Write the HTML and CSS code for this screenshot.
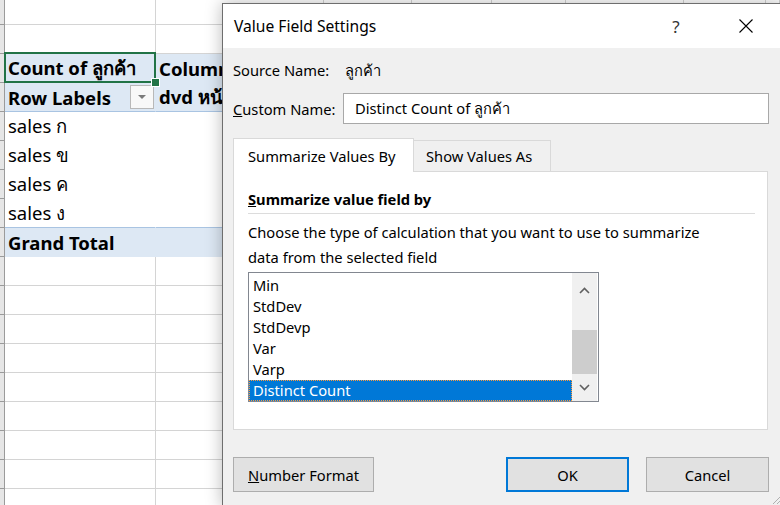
FILE: index.html
```html
<!DOCTYPE html>
<html>
<head>
<meta charset="utf-8">
<link rel="stylesheet" href="styles.css">
</head>
<body>
<div class="sheet">
  <div class="row r-top">
    <div class="rh"></div><div class="c ca"></div><div class="c cb fixed"></div><div class="c cc"></div><div class="c cd"></div><div class="c ce"></div><div class="c cf"></div><div class="c cg"></div><div class="c ch"></div>
  </div>
  <div class="row"><div class="rh"></div><div class="c ca"></div><div class="c cb"></div></div>
  <div class="row pv r-count"><div class="rh"></div><div class="c ca sel"><span class="b">Count of ลูกค้า</span><i class="handle"></i></div><div class="c cb"><span class="b clip">Column Labels</span></div></div>
  <div class="row pv r-labels"><div class="rh"></div><div class="c ca"><span class="b">Row Labels</span><span class="dd"><i class="tri"></i></span></div><div class="c cb"><span class="b clip">dvd หน้าร้าน</span></div></div>
  <div class="row data"><div class="rh"></div><div class="c ca"><span>sales ก</span></div><div class="c cb"></div></div>
  <div class="row data"><div class="rh"></div><div class="c ca"><span>sales ข</span></div><div class="c cb"></div></div>
  <div class="row data"><div class="rh"></div><div class="c ca"><span>sales ค</span></div><div class="c cb"></div></div>
  <div class="row data last"><div class="rh"></div><div class="c ca"><span>sales ง</span></div><div class="c cb"></div></div>
  <div class="row pv r-total"><div class="rh"></div><div class="c ca"><span class="b">Grand Total</span></div><div class="c cb"></div></div>
  <div class="row"><div class="rh"></div><div class="c ca"></div><div class="c cb"></div></div>
  <div class="row"><div class="rh"></div><div class="c ca"></div><div class="c cb"></div></div>
  <div class="row"><div class="rh"></div><div class="c ca"></div><div class="c cb"></div></div>
  <div class="row"><div class="rh"></div><div class="c ca"></div><div class="c cb"></div></div>
  <div class="row"><div class="rh"></div><div class="c ca"></div><div class="c cb"></div></div>
  <div class="row"><div class="rh"></div><div class="c ca"></div><div class="c cb"></div></div>
  <div class="row"><div class="rh"></div><div class="c ca"></div><div class="c cb"></div></div>
  <div class="row"><div class="rh"></div><div class="c ca"></div><div class="c cb"></div></div>
  <div class="row"><div class="rh"></div><div class="c ca"></div><div class="c cb"></div></div>
</div>

<div class="dialog">
  <div class="titlebar">
    <span class="title">Value Field Settings</span>
    <span class="help">?</span>
    <span class="close"><svg width="14" height="14" viewBox="0 0 14 14"><path d="M0.5 0.5 L13.5 13.5 M13.5 0.5 L0.5 13.5" stroke="#000" stroke-width="1.1" fill="none"/></svg></span>
  </div>
  <div class="dbody">
    <div class="src"><span class="lbl">Source Name:</span><span class="val">ลูกค้า</span></div>
    <div class="cname"><span class="lbl"><u>C</u>ustom Name:</span><div class="input">Distinct Count of ลูกค้า</div></div>
    <div class="tabs">
      <div class="tab active">Summarize Values By</div>
      <div class="tab other">Show Values As</div>
    </div>
    <div class="panel">
      <div class="heading"><u>S</u>ummarize value field by</div>
      <div class="sep"></div>
      <p class="desc">Choose the type of calculation that you want to use to summarize<br>data from the selected field</p>
      <div class="listbox">
        <ul class="items">
          <li>Min</li>
          <li>StdDev</li>
          <li>StdDevp</li>
          <li>Var</li>
          <li>Varp</li>
          <li class="selected">Distinct Count</li>
        </ul>
        <div class="scrollbar">
          <div class="arrow up"><svg width="11" height="7" viewBox="0 0 11 7"><path d="M1 6 L5.5 1.5 L10 6" stroke="#606060" stroke-width="1.6" fill="none"/></svg></div>
          <div class="track"><div class="thumb"></div></div>
          <div class="arrow down"><svg width="11" height="7" viewBox="0 0 11 7"><path d="M1 1 L5.5 5.5 L10 1" stroke="#606060" stroke-width="1.6" fill="none"/></svg></div>
        </div>
      </div>
    </div>
    <div class="buttons">
      <button class="btn nf"><u>N</u>umber Format</button>
      <button class="btn ok">OK</button>
      <button class="btn cancel">Cancel</button>
    </div>
  </div>
  <svg class="grip" width="12" height="12" viewBox="0 0 12 12"><path d="M11 3 L3 11 M11 7 L7 11" stroke="#b0b0b0" stroke-width="1" fill="none"/></svg>
</div>
</body>
</html>
```

FILE: styles.css
```css
html, body {
  margin: 0;
  padding: 0;
}
body {
  width: 780px;
  height: 505px;
  overflow: hidden;
  background: #fff;
  position: relative;
  font-family: "Noto Sans", sans-serif;
}

/* ---------- spreadsheet ---------- */
.sheet {
  font-size: 18.5px;
  color: #000;
}
.row {
  display: flex;
  height: 29px;
}
.row.r-top {
  height: 25px;
}
.rh {
  width: 5px;
  flex: none;
  box-sizing: border-box;
  background: #e6e6e6;
  border-right: 1px solid #9b9b9b;
  border-bottom: 1px solid #9b9b9b;
}
.c {
  box-sizing: border-box;
  border-right: 1px solid #d4d4d4;
  border-bottom: 1px solid #d4d4d4;
  display: flex;
  align-items: center;
  padding-left: 3px;
  white-space: nowrap;
  overflow: hidden;
  flex: none;
}
.ca { width: 151px; }
.cb { flex: 1; padding-left: 3px; }
.cb.fixed { flex: none; width: 168px; }
.cc { width: 88px; }
.cd { width: 80px; }
.ce { width: 74px; }
.cf { width: 118px; }
.cg { width: 82px; }
.ch { flex: 1; }

.b { font-weight: bold; }
.clip {
  max-width: 63px;
  overflow: hidden;
}

.pv .c {
  background: #dde8f4;
  border-right-color: #dde8f4;
  border-bottom-color: #dde8f4;
}
.r-labels .c {
  border-bottom-color: #a9c4e2;
}
.data .c {
  border-right-color: #fff;
  border-bottom-color: #fff;
}
.data.last .c {
  border-bottom-color: #a9c4e2;
}
.data .c span, .pv .c span.b {
  padding-top: 1px;
}

.sel {
  position: relative;
  overflow: visible;
  z-index: 2;
}
.sel::after {
  content: "";
  position: absolute;
  left: -1px;
  top: -2px;
  right: -1px;
  bottom: -1px;
  border: 2px solid #217346;
}
.handle {
  position: absolute;
  left: 146px;
  top: 24px;
  width: 7px;
  height: 7px;
  background: #217346;
  border: 1px solid #fff;
  z-index: 3;
}

.dd {
  margin-left: auto;
  margin-right: 1px;
  width: 24px;
  height: 24px;
  flex: none;
  box-sizing: border-box;
  border: 1px solid #b8b8b8;
  background: #f8f8f8;
  display: flex;
  align-items: center;
  justify-content: center;
}
.tri {
  width: 0;
  height: 0;
  border-left: 4px solid transparent;
  border-right: 4px solid transparent;
  border-top: 4px solid #7a7a7a;
}

/* ---------- dialog ---------- */
.dialog {
  position: absolute;
  left: 222px;
  top: 3px;
  width: 562px;
  height: 504px;
  box-sizing: border-box;
  border: 1px solid #6e6e6e;
  background: #f0f0f0;
  box-shadow: 0 0 16px rgba(0, 0, 0, 0.28);
  display: flex;
  flex-direction: column;
  font-family: "Noto Sans", sans-serif;
  font-size: 14.7px;
  color: #000;
}
.titlebar {
  height: 44px;
  flex: none;
  background: #fff;
  display: flex;
  align-items: center;
}
.title {
  flex: 1;
  padding-left: 11px;
  font-size: 15.6px;
}
.help {
  width: 46px;
  text-align: center;
  font-size: 17px;
  color: #333;
  margin-right: 24px;
}
.close {
  width: 46px;
  margin-right: 14px;
  display: flex;
  justify-content: center;
}

.dbody {
  padding: 10px 14px 0 10px;
  display: flex;
  flex-direction: column;
}
.src {
  display: flex;
  align-items: center;
  height: 24px;
}
.lbl {
  width: 112px;
  flex: none;
  white-space: nowrap;
}
.cname {
  display: flex;
  align-items: center;
  margin-top: 11px;
}
.cname .lbl {
  width: 110px;
}
.input {
  flex: 1;
  height: 31px;
  box-sizing: border-box;
  border: 1px solid #a8a8a8;
  background: #fff;
  padding-left: 11px;
  display: flex;
  align-items: center;
}

.tabs {
  display: flex;
  align-items: flex-end;
  height: 34px;
  margin-top: 14px;
  margin-bottom: -1px;
  position: relative;
  z-index: 1;
}
.tab {
  box-sizing: border-box;
  border: 1px solid #d9d9d9;
  display: flex;
  align-items: center;
  white-space: nowrap;
}
.tab.active {
  width: 181px;
  height: 34px;
  background: #fff;
  border-bottom: none;
  padding-left: 14px;
}
.tab.other {
  width: 137px;
  height: 32px;
  background: #f0f0f0;
  border-left: none;
  padding-left: 12px;
}

.panel {
  height: 259px;
  box-sizing: border-box;
  border: 1px solid #d9d9d9;
  background: #fff;
  padding: 15px 12px 0 14px;
  margin-right: 1px;
}
.heading {
  font-weight: bold;
  line-height: 24px;
}
.sep {
  height: 1px;
  background: #dcdcdc;
  margin-top: 2px;
}
.desc {
  margin: 6px 0 0;
  line-height: 25px;
  white-space: nowrap;
}
.listbox {
  margin-top: 2px;
  width: 351px;
  height: 130px;
  box-sizing: border-box;
  border: 1px solid #828790;
  background: #fff;
  display: flex;
}
.items {
  list-style: none;
  margin: 0;
  padding: 2px 0 0 0;
  flex: 1;
  overflow: hidden;
}
.items li {
  height: 21px;
  line-height: 21px;
  padding-left: 4px;
  box-sizing: border-box;
}
.items li.selected {
  background: #0078d7;
  color: #fff;
  border: 1px dotted #ff9a3c;
  padding-left: 3px;
  line-height: 19px;
}
.scrollbar {
  width: 25px;
  margin-right: 1px;
  background: #f0f0f0;
  display: flex;
  flex-direction: column;
}
.arrow {
  display: flex;
  align-items: center;
  justify-content: center;
}
.arrow.up { height: 34px; }
.arrow.down { height: 27px; }
.track {
  flex: 1;
  display: flex;
  flex-direction: column;
  justify-content: flex-end;
}
.thumb {
  height: 44px;
  background: #cdcdcd;
}

.buttons {
  display: flex;
  margin-top: 27px;
  gap: 17px;
}
.btn {
  height: 35px;
  box-sizing: border-box;
  background: #e1e1e1;
  border: 1px solid #adadad;
  font: inherit;
  color: #000;
  padding: 0;
}
.btn.nf { width: 141px; }
.btn.ok {
  width: 123px;
  margin-left: auto;
  border: 2px solid #0078d7;
}
.btn.cancel { width: 123px; }

.grip {
  position: absolute;
  right: 1px;
  bottom: 1px;
}
```
